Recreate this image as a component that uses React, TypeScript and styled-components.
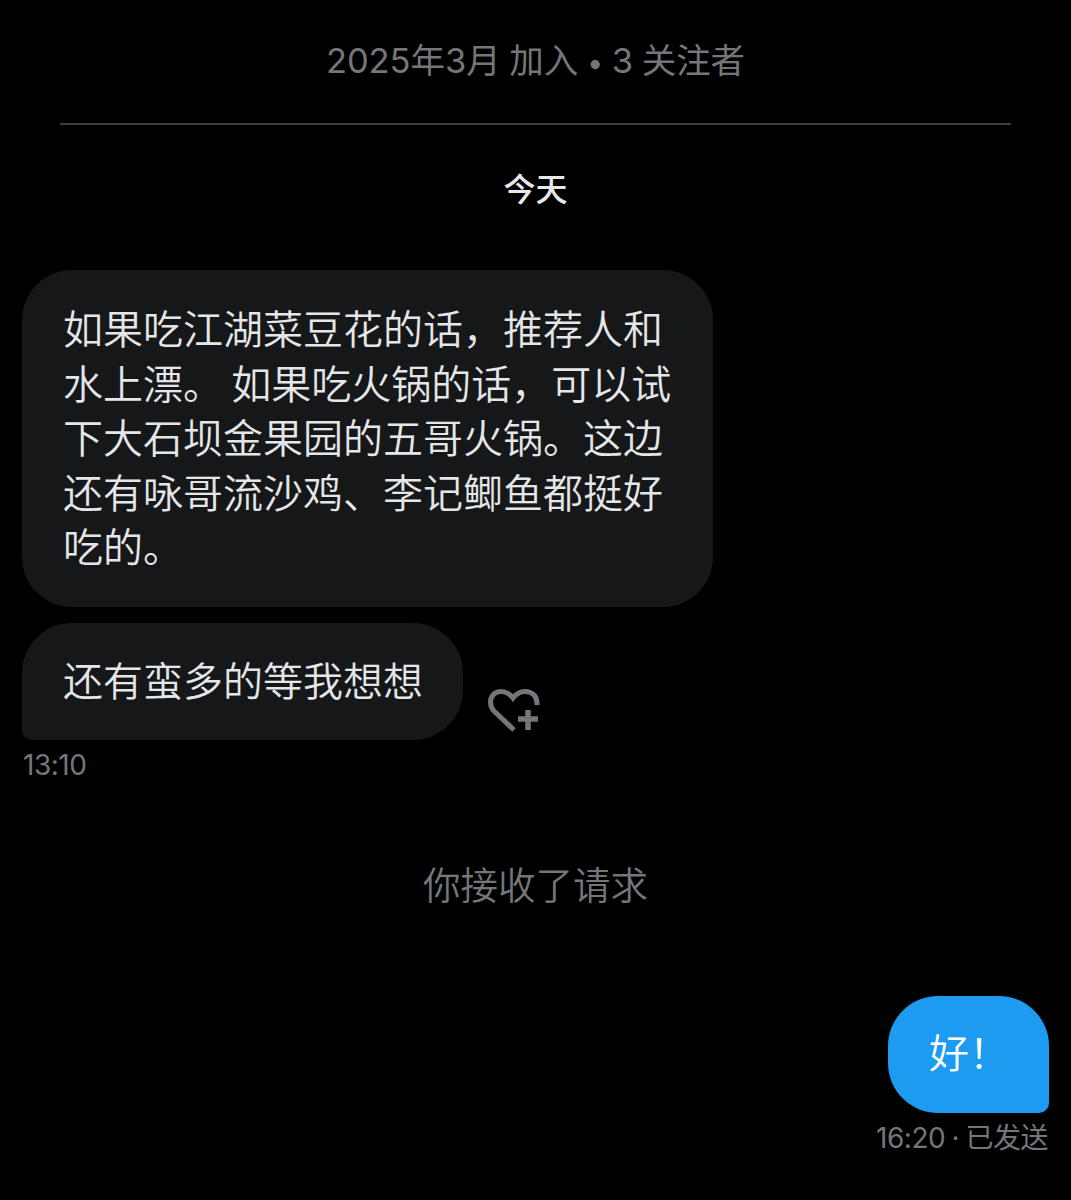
import React from 'react';
import styled, { createGlobalStyle } from 'styled-components';

const GlobalStyle = createGlobalStyle`
  html, body {
    margin: 0;
    padding: 0;
    background: #000;
  }
`;

const fontStack = `Inter, Roboto, "Noto Sans CJK SC", sans-serif`;

const Page = styled.main`
  width: 1071px;
  height: 1200px;
  overflow: hidden;
  background: #000;
  font-family: ${fontStack};
  display: flex;
  flex-direction: column;
`;

const JoinInfo = styled.div`
  margin-top: 38px;
  height: 46px;
  line-height: 46px;
  text-align: center;
  font-size: 34.5px;
  font-weight: 400;
  letter-spacing: -0.05px;
  word-spacing: -1px;
  color: #747679;
`;

const Dot = styled.span`
  font-size: 29px;
`;

const Divider = styled.hr`
  margin: 39px 60px 0;
  border: 0;
  height: 2px;
  background: #404148;
`;

const DayLabel = styled.div`
  margin-top: 44px;
  height: 42px;
  line-height: 42px;
  text-align: center;
  font-size: 32px;
  font-weight: 500;
  color: #e7e9ea;
`;

const Thread = styled.section`
  margin-top: 59px;
  padding: 0 22px;
  display: flex;
  flex-direction: column;
`;

const Bubble = styled.div<{ $corner?: 'left' | 'right' }>`
  box-sizing: border-box;
  font-size: 40px;
  font-weight: 350;
  line-height: 54px;
  padding: 32px 41px 31px;
  white-space: nowrap;
  color: ${(p) => (p.$corner === 'right' ? '#fff' : '#e4e6e7')};
  background: ${(p) => (p.$corner === 'right' ? '#1d9bf0' : '#161719')};
  border-radius: 50px;
  border-bottom-left-radius: ${(p) => (p.$corner === 'left' ? '10px' : '50px')};
  border-bottom-right-radius: ${(p) => (p.$corner === 'right' ? '10px' : '50px')};
`;

const FirstBubble = styled(Bubble)`
  width: 691px;
  line-height: 54.5px;
  padding: 33px 41px 31.5px;
  word-spacing: -3px;
`;

const Line = styled.div`
  display: block;
`;

const ReplyRow = styled.div`
  margin-top: 16px;
  display: flex;
  align-items: flex-end;
  gap: 25px;
`;

const ReplyBubble = styled(Bubble)`
  width: 441px;
`;

const ReactButton = styled.svg`
  width: 52px;
  height: 46px;
  margin-bottom: 5px;
  fill: none;
  stroke: #747679;
`;

const Time = styled.div<{ $right?: boolean }>`
  font-size: 28px;
  font-weight: 400;
  line-height: 36px;
  letter-spacing: -0.5px;
  word-spacing: ${(p) => (p.$right ? '-1px' : '0')};
  color: #747679;
  margin: 7px ${(p) => (p.$right ? '1px' : '0')} 0 ${(p) => (p.$right ? '0' : '1px')};
  text-align: ${(p) => (p.$right ? 'right' : 'left')};
`;

const Notice = styled.div`
  margin-top: 76px;
  height: 54px;
  line-height: 54px;
  text-align: center;
  font-size: 37.5px;
  font-weight: 350;
  color: #747679;
`;

const OwnRow = styled.div`
  margin-top: 83px;
  display: flex;
  justify-content: flex-end;
`;

const OwnBubble = styled(Bubble)`
  width: 161px;
  padding: 31px 41px 32px;
`;

export default function App() {
  return (
    <Page>
      <GlobalStyle />
      <JoinInfo>
        2025年3月 加入 <Dot>•</Dot> 3 关注者
      </JoinInfo>
      <Divider />
      <DayLabel>今天</DayLabel>
      <Thread>
        <FirstBubble>
          <Line>如果吃江湖菜豆花的话，推荐人和</Line>
          <Line>水上漂。 如果吃火锅的话，可以试</Line>
          <Line>下大石坝金果园的五哥火锅。这边</Line>
          <Line>还有咏哥流沙鸡、李记鲫鱼都挺好</Line>
          <Line>吃的。</Line>
        </FirstBubble>
        <ReplyRow>
          <ReplyBubble $corner="left">还有蛮多的等我想想</ReplyBubble>
          <ReactButton viewBox="0 0 52 46">
            <path
              d="M26 41 L6 22 C3 19 2.5 16 2.5 13 C2.5 7 7 2.5 13 2.5 C18 2.5 22 5 25 9 C28 5 32 2.5 37 2.5 C44 2.5 49 7 49 14 L49 16"
              strokeWidth="5"
            />
            <path d="M30 30 H50 M40 21 V41" strokeWidth="5.5" />
          </ReactButton>
        </ReplyRow>
        <Time>13:10</Time>
        <Notice>你接收了请求</Notice>
        <OwnRow>
          <OwnBubble $corner="right">好！</OwnBubble>
        </OwnRow>
        <Time $right>16:20 · 已发送</Time>
      </Thread>
    </Page>
  );
}
